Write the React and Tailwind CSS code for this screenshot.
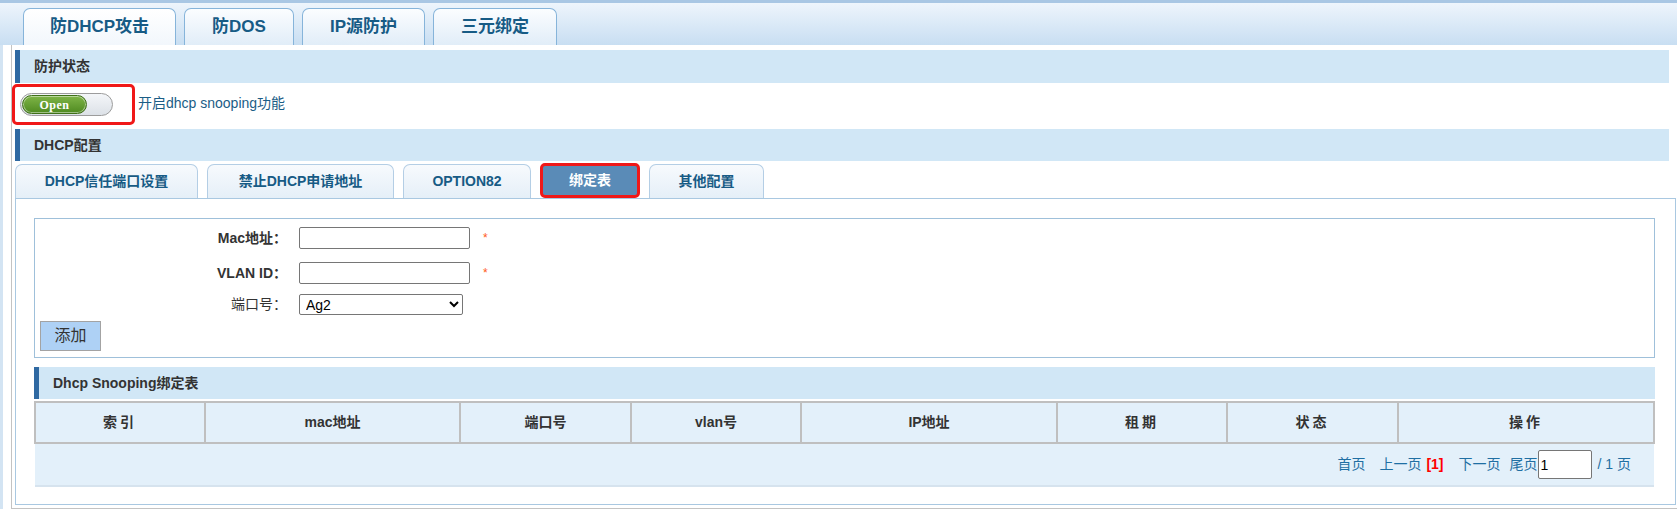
import React from 'react';

const topTabs = [
  { label: '防DHCP攻击', w: 'w-[153px]', active: true },
  { label: '防DOS', w: 'w-[110px]' },
  { label: 'IP源防护', w: 'w-[123px]' },
  { label: '三元绑定', w: 'w-[124px]' },
];

const subTabs = [
  { label: 'DHCP信任端口设置', w: 'w-[183px]' },
  { label: '禁止DHCP申请地址', w: 'w-[187px]' },
  { label: 'OPTION82', w: 'w-[128px]' },
  { label: '绑定表', w: 'w-[100px]', active: true },
  { label: '其他配置', w: 'w-[115px]' },
];

const columns = [
  { label: '索引', w: 'w-[170px]', spaced: true },
  { label: 'mac地址', w: 'w-[255px]' },
  { label: '端口号', w: 'w-[171px]' },
  { label: 'vlan号', w: 'w-[170px]' },
  { label: 'IP地址', w: 'w-[256px]' },
  { label: '租期', w: 'w-[170px]', spaced: true },
  { label: '状态', w: 'w-[171px]', spaced: true },
  { label: '操作', w: 'w-[256px]', spaced: true },
];

const SectionHeader = ({ title, className = '' }) => (
  <div className={`h-[32px] bg-[#d1e7f6] border-l-[5px] border-[#2f69a2] flex items-center pl-[14px] ${className}`}>
    <span className="text-[14px] font-bold text-[#333]">{title}</span>
  </div>
);

const Toggle = () => (
  <div className="relative w-[93px] h-[23px] rounded-full border border-[#9c9c9c] bg-gradient-to-b from-[#f4f6f9] to-[#dce1e7]">
    <div className="absolute left-[1px] top-[1px] bottom-[1px] w-[65px] rounded-full bg-gradient-to-b from-[#7fb547] to-[#4f8a20] border border-[#3f7018] shadow-[inset_0_0_0_1px_rgba(255,255,255,0.45)] flex items-center justify-center">
      <span className="text-white text-[12px] font-bold tracking-[0.5px]" style={{ fontFamily: '"Liberation Serif", serif' }}>Open</span>
    </div>
  </div>
);

export default function App() {
  return (
    <div
      className="w-[1677px] h-[509px] bg-white overflow-hidden text-[#333]"
      style={{ fontFamily: '"Liberation Sans", "Noto Sans CJK SC", sans-serif' }}
    >
      {/* top tab bar */}
      <div className="h-[45px] border-t-[3px] border-[#a9c7e4] bg-gradient-to-b from-[#eef5fc] to-[#c8def2] flex items-end pl-[23px] gap-[8px]">
        {topTabs.map((t) => (
          <div
            key={t.label}
            className={`${t.w} h-[37px] rounded-t-[7px] border border-b-0 border-[#86b4da] flex items-center justify-center text-[17px] font-bold text-[#175b85] ${
              t.active ? 'bg-gradient-to-b from-white to-[#f2f7fc]' : 'bg-gradient-to-b from-[#fbfdff] to-[#e1edf8]'
            }`}
          >
            {t.label}
          </div>
        ))}
      </div>

      <div className="flex h-[464px]">
        <div className="w-[13px] border-l-[3px] border-[#d3e4f3]" />
        <div className="flex-1 border-l border-b border-[#c3c3c3] flex flex-col">
          <SectionHeader title="防护状态" className="mt-[5px] ml-[3px] mr-[8px] h-[33px]" />

          <div className="h-[46px] flex items-start">
            <div className="mt-[1px] w-[123px] h-[41px] border-[3px] border-[#f01818] rounded-[5px] flex items-center pl-[5px]">
              <Toggle />
            </div>
            <span className="ml-[3px] mt-[10px] text-[14px] text-[#1b5d86]">开启dhcp snooping功能</span>
          </div>

          <SectionHeader title="DHCP配置" className="ml-[3px] mr-[8px]" />

          <div className="mt-[2px] ml-[3px] h-[35px] flex items-end gap-[9px]">
            {subTabs.map((t) =>
              t.active ? (
                <div
                  key={t.label}
                  className={`${t.w} h-[35px] rounded-[5px] border-[3px] border-[#f01818] bg-[#5a8bb7] flex items-center justify-center text-[14px] font-bold text-white`}
                >
                  {t.label}
                </div>
              ) : (
                <div
                  key={t.label}
                  className={`${t.w} h-[34px] rounded-t-[7px] border border-b-0 border-[#b4cee5] bg-gradient-to-b from-[#f7fafd] to-[#e5eff8] flex items-center justify-center text-[14px] font-bold text-[#175b85]`}
                >
                  {t.label}
                </div>
              )
            )}
          </div>

          <div className="ml-[3px] mr-[1px] h-[307px] border border-[#a9c8e1] pl-[18px] pr-[20px] pt-[19px]">
            {/* form */}
            <div className="border border-[#9fc0da] h-[140px] flex flex-col">
              <div className="mt-[8px] flex items-center h-[22px]">
                <label className="w-[252px] text-right text-[14px] font-bold">Mac地址：</label>
                <input className="ml-[12px] w-[171px] h-[22px] border border-[#767676] rounded-[2px] bg-white" />
                <span className="ml-[13px] text-[12px] text-[#ff5a1a]">*</span>
              </div>
              <div className="mt-[13px] flex items-center h-[22px]">
                <label className="w-[252px] text-right text-[14px] font-bold">VLAN ID：</label>
                <input className="ml-[12px] w-[171px] h-[22px] border border-[#767676] rounded-[2px] bg-white" />
                <span className="ml-[13px] text-[12px] text-[#ff5a1a]">*</span>
              </div>
              <div className="mt-[10px] flex items-center h-[21px]">
                <label className="w-[252px] text-right text-[14px]">端口号：</label>
                <select className="ml-[12px] w-[164px] h-[21px] border border-[#767676] rounded-[2px] bg-white text-[14px] text-black pl-[2px]" defaultValue="Ag2">
                  <option>Ag2</option>
                </select>
              </div>
              <button className="mt-[6px] ml-[5px] w-[61px] h-[30px] bg-[#aed1f5] border border-[#a3a3a3] text-[16px] text-[#333]">
                添加
              </button>
            </div>

            <SectionHeader title="Dhcp Snooping绑定表" className="mt-[9px] h-[32px]" />

            <table className="mt-[2px] w-[1619px] table-fixed border-collapse">
              <thead>
                <tr className="h-[41px] bg-[#e3f0fa]">
                  {columns.map((c) => (
                    <th
                      key={c.label}
                      className={`${c.w} border-2 border-[#bfbfbf] text-[14px] font-bold text-[#333] ${c.spaced ? 'tracking-[3px]' : ''}`}
                    >
                      {c.label}
                    </th>
                  ))}
                </tr>
              </thead>
              <tbody>
                <tr className="h-[43px] bg-[#e3f0fa]">
                  <td colSpan={8} className="border-b-2 border-[#d6e3ee] pr-[23px]">
                    <div className="flex items-center justify-end text-[14px] text-[#1f6fa3]">
                      <span>首页</span>
                      <span className="ml-[14px]">上一页</span>
                      <span className="ml-[5px] font-bold text-[#ff0000]">[1]</span>
                      <span className="ml-[15px]">下一页</span>
                      <span className="ml-[9px]">尾页</span>
                      <input defaultValue="1" className="w-[54px] h-[29px] border border-[#767676] rounded-[2px] bg-white text-black text-[14px] pl-[2px]" />
                      <span className="ml-[6px]">/ 1 页</span>
                    </div>
                  </td>
                </tr>
              </tbody>
            </table>
          </div>
        </div>
      </div>
    </div>
  );
}
